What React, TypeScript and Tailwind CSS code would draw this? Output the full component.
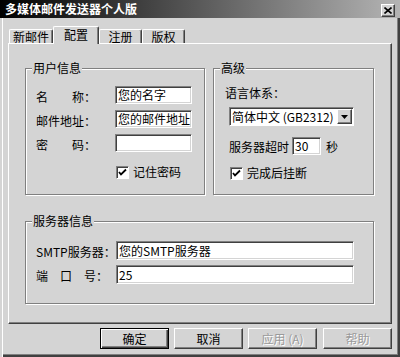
import React from "react"

const font = "font-['Noto_Sans_CJK_SC',sans-serif]"

function Sunken({ className, children }: { className: string; children?: React.ReactNode }) {
  return (
    <div
      className={`${className} flex items-center overflow-hidden border border-t-[#808080] border-l-[#808080] border-b-white border-r-white bg-white pl-[2px] text-[12px] leading-[14px] text-black shadow-[inset_1px_1px_0_#404040,inset_-1px_-1px_0_#d4d4d4]`}
    >
      {children}
    </div>
  )
}

function Check({ label, className }: { label: string; className: string }) {
  return (
    <div className={`${className} flex items-center`}>
      <div className="flex h-[13px] w-[13px] items-center justify-center border border-t-[#808080] border-l-[#808080] border-b-white border-r-white bg-white shadow-[inset_1px_1px_0_#404040]">
        <svg width="9" height="9" viewBox="0 0 9 9">
          <path d="M1 4 L3 6.5 L8 1.5" fill="none" stroke="#000" strokeWidth="1.8" />
        </svg>
      </div>
      <span className="ml-[4px] text-[12px] leading-[14px]">{label}</span>
    </div>
  )
}

function Group({ title, className, children }: { title: string; className: string; children: React.ReactNode }) {
  return (
    <div
      className={`${className} relative border border-[#808080] shadow-[inset_1px_1px_0_#fff,1px_1px_0_#fff]`}
    >
      <span className="absolute -top-[8px] left-[6px] bg-[#d4d4d4] px-[1px] text-[12px] leading-[14px]">{title}</span>
      {children}
    </div>
  )
}

function Btn({ label, def, disabled }: { label: string; def?: boolean; disabled?: boolean }) {
  const base = "flex h-[21px] w-[69px] items-center justify-center text-[12px] leading-[14px]"
  if (def) {
    return (
      <div className={`${base} border border-black shadow-[inset_1px_1px_0_#fff,inset_-1px_-1px_0_#404040,inset_-2px_-2px_0_#808080]`}>
        {label}
      </div>
    )
  }
  return (
    <div
      className={`${base} border border-t-white border-l-white border-r-[#404040] border-b-[#404040] shadow-[inset_-1px_-1px_0_#808080] ${
        disabled ? "text-[#9a9a9a] [text-shadow:1px_1px_0_#fff]" : "text-black"
      }`}
    >
      {label}
    </div>
  )
}

function Tab({ label, active, className }: { label: string; active?: boolean; className: string }) {
  if (active) {
    return (
      <div
        className={`${className} relative z-10 -mb-[1px] flex h-[18px] items-start justify-center rounded-t-[2px] border-t border-l border-r border-t-white border-l-white border-r-[#404040] bg-[#d4d4d4] pt-[1px] text-[12px] leading-[14px] shadow-[inset_-1px_0_0_#808080]`}
      >
        {label}
      </div>
    )
  }
  return (
    <div
      className={`${className} flex h-[14px] items-start justify-center rounded-t-[2px] border-t border-l border-r border-t-white border-l-white border-r-[#404040] text-[12px] leading-[13px] shadow-[inset_-1px_0_0_#808080]`}
    >
      {label}
    </div>
  )
}

export default function App() {
  return (
    <div
      className={`${font} flex h-[357px] w-[400px] flex-col overflow-hidden bg-[#d4d4d4] text-black shadow-[inset_2px_0_0_#d4d4d4,inset_3px_0_0_#fff,inset_-2px_-2px_0_#404040,inset_-3px_-3px_0_#808080]`}
    >
      <div className="flex h-[18px] items-center justify-between bg-[linear-gradient(to_right,#000,#b4b4b4)] pl-[5px] pr-[5px]">
        <span className="text-[12px] font-bold leading-[14px] text-white">多媒体邮件发送器个人版</span>
        <div className="mt-[2px] flex h-[13px] w-[14px] items-center justify-center border border-t-white border-l-white border-r-[#404040] border-b-[#404040] bg-[#d4d4d4] shadow-[inset_-1px_-1px_0_#808080]">
          <svg width="8" height="7" viewBox="0 0 8 7">
            <path d="M0.5 0.5 L7.5 6.5 M7.5 0.5 L0.5 6.5" stroke="#000" strokeWidth="1.6" />
          </svg>
        </div>
      </div>

      <div className="mt-[8px] flex items-end pl-[9px]">
        <Tab label="新邮件" className="w-[44px]" />
        <Tab label="配置" active className="w-[46px]" />
        <Tab label="注册" className="w-[43px]" />
        <Tab label="版权" className="w-[43px]" />
      </div>

      <div className="ml-[8px] flex h-[281px] w-[384px] flex-col border border-t-white border-l-white border-r-[#404040] border-b-[#404040] shadow-[inset_-1px_-1px_0_#808080]">
        <div className="mt-[24px] flex pl-[16px]">
          <Group title="用户信息" className="h-[127px] w-[180px]">
            <div className="flex flex-col gap-[6px] pl-[10px] pt-[17px] text-[12px] leading-[14px]">
              <div className="flex items-center">
                <span className="w-[79px] pt-[3px]">名　　称：</span>
                <Sunken className="h-[18px] w-[77px]">您的名字</Sunken>
              </div>
              <div className="flex items-center">
                <span className="w-[79px] pt-[3px]">邮件地址：</span>
                <Sunken className="h-[18px] w-[77px]">您的邮件地址</Sunken>
              </div>
              <div className="flex items-center">
                <span className="w-[79px] pt-[3px]">密　　码：</span>
                <Sunken className="h-[18px] w-[77px]" />
              </div>
              <Check label="记住密码" className="ml-[80px] mt-[7px]" />
            </div>
          </Group>

          <Group title="高级" className="ml-[8px] h-[127px] w-[161px]">
            <div className="flex flex-col pl-[11px] pt-[17px] text-[12px] leading-[14px]">
              <span>语言体系：</span>
              <div className="ml-[4px] mt-[7px] flex h-[19px] w-[125px] items-center justify-between border border-t-[#808080] border-l-[#808080] border-b-white border-r-white bg-white pl-[2px] shadow-[inset_1px_1px_0_#404040]">
                <span className="text-[12px] leading-[14px]">简体中文 (GB2312)</span>
                <div className="mr-[1px] flex h-[15px] w-[15px] items-center justify-center border border-t-white border-l-white border-r-[#404040] border-b-[#404040] bg-[#d4d4d4] shadow-[inset_-1px_-1px_0_#808080]">
                  <svg width="7" height="4" viewBox="0 0 7 4">
                    <path d="M0 0 H7 L3.5 4 Z" fill="#000" />
                  </svg>
                </div>
              </div>
              <div className="ml-[4px] mt-[11px] flex items-center">
                <span className="pt-[2px]">服务器超时</span>
                <Sunken className="ml-[3px] h-[18px] w-[29px]">30</Sunken>
                <span className="ml-[5px] pt-[2px]">秒</span>
              </div>
              <Check label="完成后挂断" className="ml-[5px] mt-[11px]" />
            </div>
          </Group>
        </div>

        <Group title="服务器信息" className="ml-[16px] mt-[26px] h-[83px] w-[349px]">
          <div className="flex flex-col gap-[5px] pl-[10px] pt-[19px] text-[12px] leading-[14px]">
            <div className="flex items-center">
              <span className="w-[80px] pt-[3px]">SMTP服务器：</span>
              <Sunken className="h-[19px] w-[238px]">您的SMTP服务器</Sunken>
            </div>
            <div className="flex items-center">
              <span className="w-[80px] pt-[3px]">端　口　号：</span>
              <Sunken className="h-[19px] w-[238px]">25</Sunken>
            </div>
          </div>
        </Group>
      </div>

      <div className="mt-[4px] flex justify-end gap-[5px] pr-[8px]">
        <Btn label="确定" def />
        <Btn label="取消" />
        <Btn label="应用 (A)" disabled />
        <div className="ml-[1px]">
          <Btn label="帮助" disabled />
        </div>
      </div>
    </div>
  )
}
